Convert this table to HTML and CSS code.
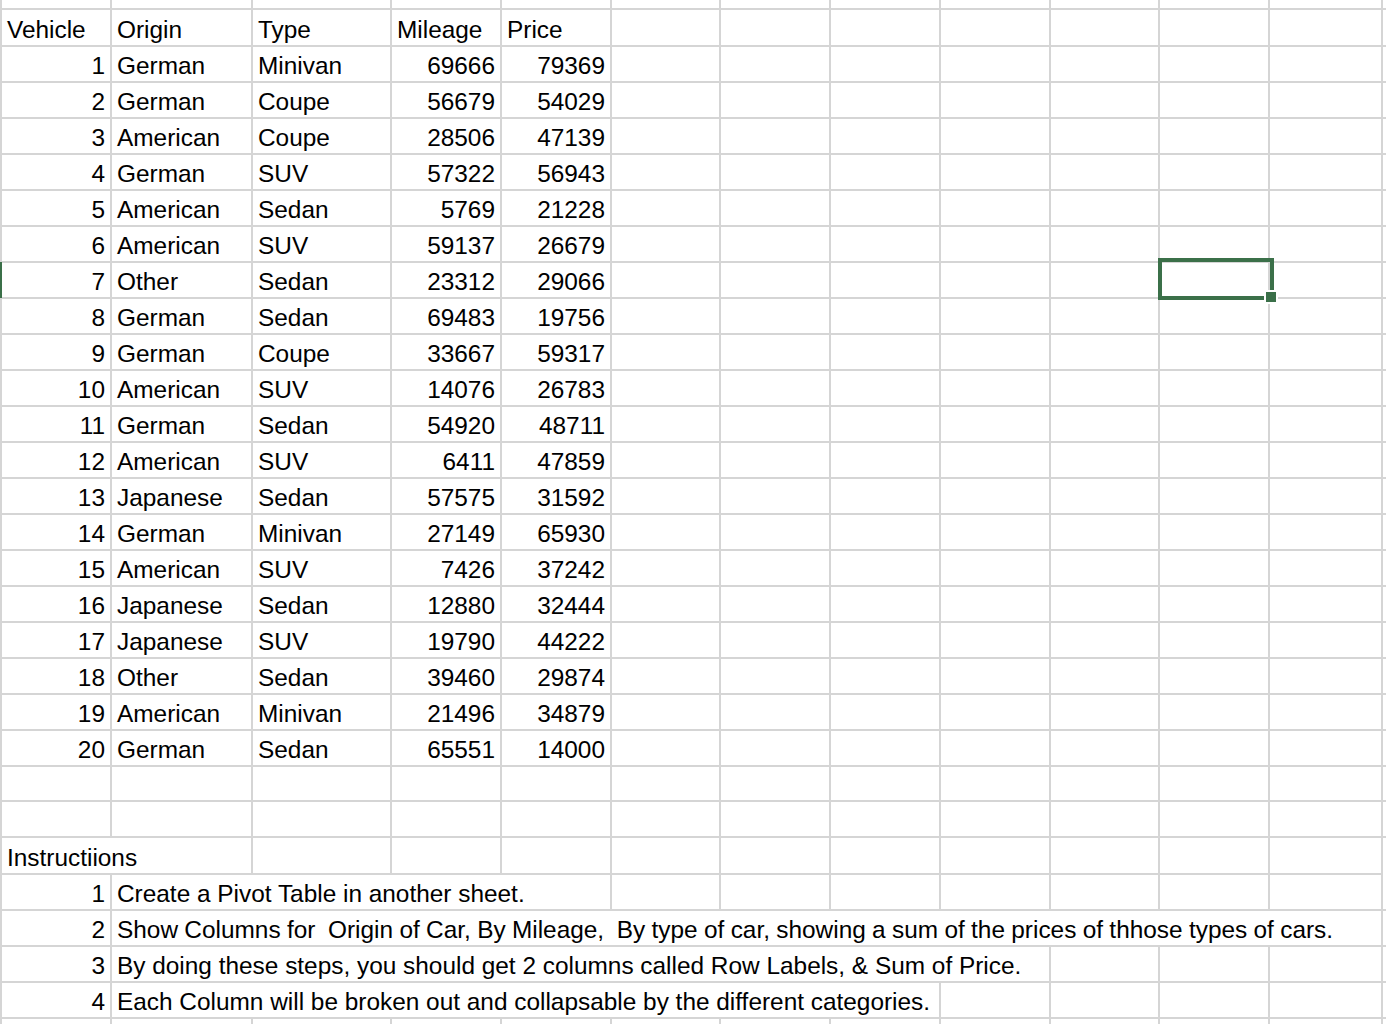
FILE: index.html
```html
<!DOCTYPE html>
<html>
<head>
<meta charset="utf-8">
<link rel="stylesheet" href="styles.css">
</head>
<body>
<div class="sheet">
  <div class="row top"><div class="c"></div><div class="c"></div><div class="c"></div><div class="c"></div><div class="c"></div><div class="c"></div><div class="c"></div><div class="c"></div><div class="c"></div><div class="c"></div><div class="c"></div><div class="c"></div><div class="c"></div></div>
  <div class="row"><div class="c">Vehicle</div><div class="c">Origin</div><div class="c">Type</div><div class="c">Mileage</div><div class="c">Price</div><div class="c"></div><div class="c"></div><div class="c"></div><div class="c"></div><div class="c"></div><div class="c"></div><div class="c"></div><div class="c"></div></div>
  <div class="row"><div class="c n">1</div><div class="c">German</div><div class="c">Minivan</div><div class="c n">69666</div><div class="c n">79369</div><div class="c"></div><div class="c"></div><div class="c"></div><div class="c"></div><div class="c"></div><div class="c"></div><div class="c"></div><div class="c"></div></div>
  <div class="row"><div class="c n">2</div><div class="c">German</div><div class="c">Coupe</div><div class="c n">56679</div><div class="c n">54029</div><div class="c"></div><div class="c"></div><div class="c"></div><div class="c"></div><div class="c"></div><div class="c"></div><div class="c"></div><div class="c"></div></div>
  <div class="row"><div class="c n">3</div><div class="c">American</div><div class="c">Coupe</div><div class="c n">28506</div><div class="c n">47139</div><div class="c"></div><div class="c"></div><div class="c"></div><div class="c"></div><div class="c"></div><div class="c"></div><div class="c"></div><div class="c"></div></div>
  <div class="row"><div class="c n">4</div><div class="c">German</div><div class="c">SUV</div><div class="c n">57322</div><div class="c n">56943</div><div class="c"></div><div class="c"></div><div class="c"></div><div class="c"></div><div class="c"></div><div class="c"></div><div class="c"></div><div class="c"></div></div>
  <div class="row"><div class="c n">5</div><div class="c">American</div><div class="c">Sedan</div><div class="c n">5769</div><div class="c n">21228</div><div class="c"></div><div class="c"></div><div class="c"></div><div class="c"></div><div class="c"></div><div class="c"></div><div class="c"></div><div class="c"></div></div>
  <div class="row"><div class="c n">6</div><div class="c">American</div><div class="c">SUV</div><div class="c n">59137</div><div class="c n">26679</div><div class="c"></div><div class="c"></div><div class="c"></div><div class="c"></div><div class="c"></div><div class="c"></div><div class="c"></div><div class="c"></div></div>
  <div class="row active"><div class="c n">7</div><div class="c">Other</div><div class="c">Sedan</div><div class="c n">23312</div><div class="c n">29066</div><div class="c"></div><div class="c"></div><div class="c"></div><div class="c"></div><div class="c"></div><div class="c"></div><div class="c"></div><div class="c"></div></div>
  <div class="row"><div class="c n">8</div><div class="c">German</div><div class="c">Sedan</div><div class="c n">69483</div><div class="c n">19756</div><div class="c"></div><div class="c"></div><div class="c"></div><div class="c"></div><div class="c"></div><div class="c"></div><div class="c"></div><div class="c"></div></div>
  <div class="row"><div class="c n">9</div><div class="c">German</div><div class="c">Coupe</div><div class="c n">33667</div><div class="c n">59317</div><div class="c"></div><div class="c"></div><div class="c"></div><div class="c"></div><div class="c"></div><div class="c"></div><div class="c"></div><div class="c"></div></div>
  <div class="row"><div class="c n">10</div><div class="c">American</div><div class="c">SUV</div><div class="c n">14076</div><div class="c n">26783</div><div class="c"></div><div class="c"></div><div class="c"></div><div class="c"></div><div class="c"></div><div class="c"></div><div class="c"></div><div class="c"></div></div>
  <div class="row"><div class="c n">11</div><div class="c">German</div><div class="c">Sedan</div><div class="c n">54920</div><div class="c n">48711</div><div class="c"></div><div class="c"></div><div class="c"></div><div class="c"></div><div class="c"></div><div class="c"></div><div class="c"></div><div class="c"></div></div>
  <div class="row"><div class="c n">12</div><div class="c">American</div><div class="c">SUV</div><div class="c n">6411</div><div class="c n">47859</div><div class="c"></div><div class="c"></div><div class="c"></div><div class="c"></div><div class="c"></div><div class="c"></div><div class="c"></div><div class="c"></div></div>
  <div class="row"><div class="c n">13</div><div class="c">Japanese</div><div class="c">Sedan</div><div class="c n">57575</div><div class="c n">31592</div><div class="c"></div><div class="c"></div><div class="c"></div><div class="c"></div><div class="c"></div><div class="c"></div><div class="c"></div><div class="c"></div></div>
  <div class="row"><div class="c n">14</div><div class="c">German</div><div class="c">Minivan</div><div class="c n">27149</div><div class="c n">65930</div><div class="c"></div><div class="c"></div><div class="c"></div><div class="c"></div><div class="c"></div><div class="c"></div><div class="c"></div><div class="c"></div></div>
  <div class="row"><div class="c n">15</div><div class="c">American</div><div class="c">SUV</div><div class="c n">7426</div><div class="c n">37242</div><div class="c"></div><div class="c"></div><div class="c"></div><div class="c"></div><div class="c"></div><div class="c"></div><div class="c"></div><div class="c"></div></div>
  <div class="row"><div class="c n">16</div><div class="c">Japanese</div><div class="c">Sedan</div><div class="c n">12880</div><div class="c n">32444</div><div class="c"></div><div class="c"></div><div class="c"></div><div class="c"></div><div class="c"></div><div class="c"></div><div class="c"></div><div class="c"></div></div>
  <div class="row"><div class="c n">17</div><div class="c">Japanese</div><div class="c">SUV</div><div class="c n">19790</div><div class="c n">44222</div><div class="c"></div><div class="c"></div><div class="c"></div><div class="c"></div><div class="c"></div><div class="c"></div><div class="c"></div><div class="c"></div></div>
  <div class="row"><div class="c n">18</div><div class="c">Other</div><div class="c">Sedan</div><div class="c n">39460</div><div class="c n">29874</div><div class="c"></div><div class="c"></div><div class="c"></div><div class="c"></div><div class="c"></div><div class="c"></div><div class="c"></div><div class="c"></div></div>
  <div class="row"><div class="c n">19</div><div class="c">American</div><div class="c">Minivan</div><div class="c n">21496</div><div class="c n">34879</div><div class="c"></div><div class="c"></div><div class="c"></div><div class="c"></div><div class="c"></div><div class="c"></div><div class="c"></div><div class="c"></div></div>
  <div class="row"><div class="c n">20</div><div class="c">German</div><div class="c">Sedan</div><div class="c n">65551</div><div class="c n">14000</div><div class="c"></div><div class="c"></div><div class="c"></div><div class="c"></div><div class="c"></div><div class="c"></div><div class="c"></div><div class="c"></div></div>
  <div class="row"><div class="c"></div><div class="c"></div><div class="c"></div><div class="c"></div><div class="c"></div><div class="c"></div><div class="c"></div><div class="c"></div><div class="c"></div><div class="c"></div><div class="c"></div><div class="c"></div><div class="c"></div></div>
  <div class="row"><div class="c"></div><div class="c"></div><div class="c"></div><div class="c"></div><div class="c"></div><div class="c"></div><div class="c"></div><div class="c"></div><div class="c"></div><div class="c"></div><div class="c"></div><div class="c"></div><div class="c"></div></div>
  <div class="row"><div class="c span2">Instructiions</div><div class="c"></div><div class="c"></div><div class="c"></div><div class="c"></div><div class="c"></div><div class="c"></div><div class="c"></div><div class="c"></div><div class="c"></div><div class="c"></div></div>
  <div class="row"><div class="c n">1</div><div class="c span4">Create a Pivot Table in another sheet.</div><div class="c"></div><div class="c"></div><div class="c"></div><div class="c"></div><div class="c"></div><div class="c"></div><div class="c"></div><div class="c"></div></div>
  <div class="row"><div class="c n">2</div><div class="c span11 tight">Show Columns for  Origin of Car, By Mileage,  By type of car, showing a sum of the prices of thhose types of cars.</div><div class="c"></div></div>
  <div class="row"><div class="c n">3</div><div class="c span8">By doing these steps, you should get 2 columns called Row Labels, &amp; Sum of Price.</div><div class="c"></div><div class="c"></div><div class="c"></div><div class="c"></div></div>
  <div class="row"><div class="c n">4</div><div class="c span7">Each Column will be broken out and collapsable by the different categories.</div><div class="c"></div><div class="c"></div><div class="c"></div><div class="c"></div><div class="c"></div></div>
  <div class="row"><div class="c"></div><div class="c"></div><div class="c"></div><div class="c"></div><div class="c"></div><div class="c"></div><div class="c"></div><div class="c"></div><div class="c"></div><div class="c"></div><div class="c"></div><div class="c"></div><div class="c"></div></div>
  <div class="selection"><div class="handle"></div></div>
</div>
</body>
</html>
```
FILE: styles.css
```css
html, body {
  margin: 0;
  padding: 0;
  background: #ffffff;
  overflow: hidden;
}

.sheet {
  position: relative;
  width: 1386px;
  height: 1024px;
  overflow: hidden;
  font-family: "Liberation Sans", Arial, sans-serif;
  font-size: 24.4px;
  color: #000000;
}

.row {
  display: grid;
  grid-template-columns: 110px 141px 139px 110px 110px 109px 110px 110px 110px 109px 110px 113px 110px;
  height: 36px;
  border-left: 2px solid #d5d5d5;
  width: 1491px;
}

.row.top {
  height: 10px;
}

.row.active {
  border-left-color: #3b7049;
}

.c {
  box-sizing: border-box;
  border-right: 2px solid #d5d5d5;
  border-bottom: 2px solid #d5d5d5;
  padding: 5px 5px 0 5px;
  white-space: pre;
  line-height: 30px;
  overflow: visible;
}

.n {
  text-align: right;
}

.tight {
  word-spacing: -0.45px;
}

.span2 { grid-column: span 2; }
.span4 { grid-column: span 4; }
.span7 { grid-column: span 7; }
.span8 { grid-column: span 8; }
.span11 { grid-column: span 11; }

.selection {
  position: absolute;
  left: 1158px;
  top: 258px;
  width: 116px;
  height: 42px;
  box-sizing: border-box;
  border: 4px solid #3b7049;
}

.handle {
  position: absolute;
  right: -6px;
  bottom: -6px;
  width: 10px;
  height: 10px;
  background: #3b7049;
  box-shadow: 0 0 0 2px #ffffff;
}
```
